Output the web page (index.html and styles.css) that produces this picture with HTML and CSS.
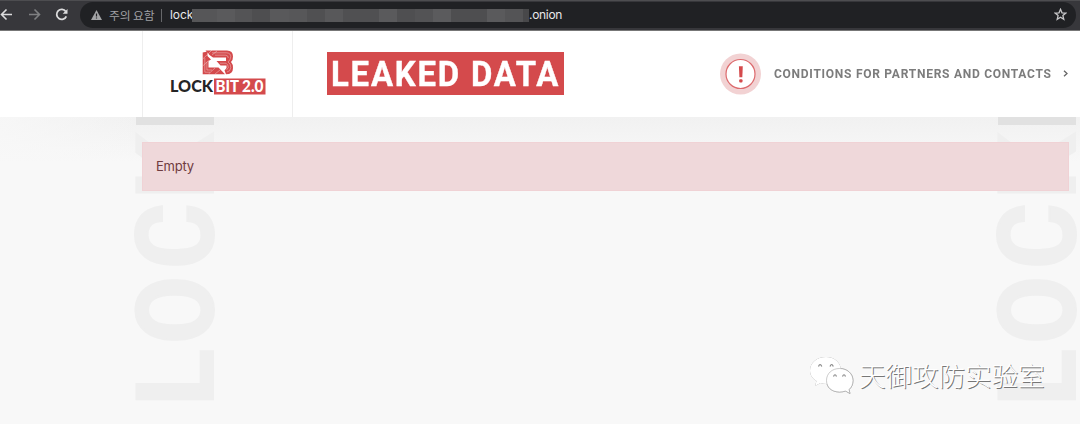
FILE: index.html
```html
<!DOCTYPE html>
<html lang="en">
<head>
<meta charset="utf-8">
<title>Leaked data</title>
<link rel="stylesheet" href="styles.css">
</head>
<body>
<div class="browser">
  <svg class="nav" width="80" height="28" viewBox="0 0 80 28" fill="none" stroke-width="1.6">
    <path d="M12 14.500H2M6.500 9.500L1.500 14.500L6.500 19.500" stroke="#dcdcdd"/>
    <path d="M29 14.500H39M34.500 9.500L39.500 14.500L34.500 19.500" stroke="#7f8082"/>
    <path d="M65.800 11.500A5 5 0 1 0 66.300 16.300" stroke="#dcdcdd" stroke-width="1.800"/>
    <path d="M67.500 9V13.800H62.700Z" fill="#dcdcdd"/>
  </svg>
  <div class="address">
    <svg class="warn" width="11" height="10" viewBox="0 0 11 10"><path d="M5.500 0L11 10H0Z" fill="#a3a4a6"/><path d="M5.500 3.500V6.400M5.500 7.400V8.600" stroke="#202124" stroke-width="1.200"/></svg>
    <span class="caution">주의 요함</span>
    <span class="divider"></span>
    <span class="host">lock</span>
    <span class="mosaic"></span>
    <span class="host tld">.onion</span>
    <svg class="star" width="13" height="13" viewBox="0 0 13 13"><path d="M6.500 1.300L8 4.800L11.800 5.100L8.900 7.600L9.800 11.300L6.500 9.300L3.200 11.300L4.100 7.600L1.200 5.100L5 4.800Z" fill="none" stroke="#c6c6c8" stroke-width="1.300"/></svg>
  </div>
</div>
<header class="header">
  <div class="logo">
    <svg width="98" height="48" viewBox="0 0 98 48">
      <path d="M32.700 2.500L37.500 1.500V6L41 9.500L38.500 11V17.500H48.500L55 24.300H32.700Z" fill="#d44a4c"/>
      <path d="M35.500 .5H57Q63 .7 63 6.500Q63 10.500 61 12Q63 14 63 18Q63 24.300 56 24.300L54.500 20.500L56.500 18V15.500H50.500L46.500 11H56V7.500H43L39.500 5Z" fill="#d44a4c"/>
      <g fill="none" stroke="#fff" stroke-opacity=".5" stroke-width=".7">
        <path d="M42 2.800H56.500Q60.800 3 60.800 6.800Q60.500 10 58 12Q60.800 13.500 60.800 17.500Q60.500 21.500 57 22"/>
        <path d="M45 5.200H56Q58.300 5.500 58.300 8M50 13.200H56Q58.300 14.500 58.300 17.500L56.500 20"/>
        <path d="M34.800 8V22.200H40M36.900 12V20H42"/>
        <path d="M32.700 9L37.500 4.500M32.700 16L38.500 10.500M38.500 24L45 18M45 24L50 20M38 4L42 0M42 5L47 1"/>
      </g>
      <rect x="44" y="28.500" width="51.500" height="16" fill="#d44a4c"/>
      <text class="logo-text" x="0" y="42" textLength="43" lengthAdjust="spacingAndGlyphs" fill="#252526">LOCK</text>
      <text class="logo-text" x="45.500" y="42" textLength="23.500" lengthAdjust="spacingAndGlyphs" fill="#fff">BIT</text>
      <text class="logo-text" x="72" y="42" textLength="21.500" lengthAdjust="spacingAndGlyphs" fill="#fff">2.0</text>
    </svg>
  </div>
  <h1 class="title"><span class="title-text">LEAKED DATA</span></h1>
  <a class="conditions">
    <svg width="42" height="42" viewBox="0 0 42 42"><circle cx="20.500" cy="21" r="20.500" fill="#f2d2d3"/><circle cx="20.500" cy="21" r="14.500" fill="#fff" stroke="#dc6a6d" stroke-width="1.200"/><path d="M18.900 13.300H22.800L22.300 24.300H19.400Z" fill="#d44a4c"/><rect x="19.200" y="26.200" width="3.300" height="3.300" rx="1" fill="#d44a4c"/></svg>
    <span class="conditions-label"><span class="conditions-text">CONDITIONS FOR PARTNERS AND CONTACTS</span></span>
    <svg class="chevron" width="5" height="7" viewBox="0 0 5 7"><path d="M1 .7L4 3.500L1 6.300" fill="none" stroke="#666" stroke-width="1.300"/></svg>
  </a>
</header>
<main class="main">
  <svg class="backdrop backdrop-left" width="80" height="307" viewBox="0 0 80 307">
    <g class="backdrop-text" transform="translate(78 306) rotate(-90)">
      <text x="17" textLength="57" lengthAdjust="spacingAndGlyphs">L</text>
      <text x="79" textLength="68" lengthAdjust="spacingAndGlyphs">O</text>
      <text x="154" textLength="66" lengthAdjust="spacingAndGlyphs">C</text>
      <text x="224" textLength="65" lengthAdjust="spacingAndGlyphs">K</text>
    </g>
    <rect x="1" width="78" height="8" fill="#e1e1e1"/>
  </svg>
  <svg class="backdrop backdrop-right" width="80" height="307" viewBox="0 0 80 307">
    <g class="backdrop-text" transform="translate(78 306) rotate(-90)">
      <text x="17" textLength="57" lengthAdjust="spacingAndGlyphs">L</text>
      <text x="79" textLength="68" lengthAdjust="spacingAndGlyphs">O</text>
      <text x="154" textLength="66" lengthAdjust="spacingAndGlyphs">C</text>
      <text x="224" textLength="65" lengthAdjust="spacingAndGlyphs">K</text>
    </g>
    <rect x="1" width="78" height="8" fill="#e1e1e1"/>
  </svg>
  <div class="notice">Empty</div>
  <div class="watermark">
    <svg width="46" height="40" viewBox="0 0 46 40">
      <g class="bubble">
        <path d="M17 1C7.500 1 1 7 1 14.500C1 19 3.500 22.500 7.500 25L6 30L11.500 27Q14 28 18 28C26 28 32 22 32 14.500C32 7 26 1 17 1Z"/>
        <path d="M30.500 12.500C23 12.500 17.500 17.500 17.500 24.500C17.500 31.500 23 36 30.500 36Q34 36 36.500 35L41 37.500L40 33.500C42.500 31.500 44 28.500 44 24.500C44 17.500 38 12.500 30.500 12.500Z"/>
      </g>
      <path d="M9.500 10.500Q11 6.500 12.800 10.500M21 10.500Q22.700 6.500 24.300 10.500M24.500 20.500Q26 17 27.500 20.500M33.500 20.500Q35 17 36.500 20.500" fill="none" stroke="#888" stroke-width="1.200"/>
    </svg>
    <span class="watermark-text">天御攻防实验室</span>
  </div>
</main>
</body>
</html>
```
FILE: styles.css
```css
* { box-sizing: border-box; }
body {
  margin: 0;
  width: 1080px;
  height: 424px;
  overflow: hidden;
  display: flex;
  flex-direction: column;
  background: #f8f8f8;
  font-family: Roboto, "Noto Sans CJK KR", sans-serif;
}
.browser {
  height: 31px;
  flex: none;
  display: flex;
  align-items: flex-start;
  background: #37373b;
  border-top: 1px solid #4d4d50;
  border-bottom: 1px solid #777;
}
.nav { flex: none; margin-top: -1px; }
.address {
  width: 996px;
  height: 26px;
  margin-top: 1px;
  padding-left: 11px;
  border-radius: 13px;
  background: #202124;
  display: flex;
  align-items: center;
  white-space: nowrap;
}
.warn { margin-right: 7px; }
.caution { width: 47px; margin-top: -2px; font: 11.800px "Noto Sans CJK KR", sans-serif; letter-spacing: -.1px; color: #a0a1a4; }
.divider { width: 1px; height: 13px; margin: 0 8px 0 5px; background: #66676a; }
.host { width: 22px; margin-top: -1px; font: 12px Inter, sans-serif; letter-spacing: -.1px; color: #e8e8e9; }
.mosaic {
  width: 337px;
  height: 13px;
  margin-top: 1px;
  background: linear-gradient(90deg, #565658 25px, #5a5a5c 25px 43px, #545456 43px 60px, #4e4e50 60px 78px, #59595b 78px 97px, #575759 97px 115px, #505052 115px 133px, #58585a 133px 151px, #505052 151px 187px, #5a5a5c 187px 205px, #4f4f51 205px 223px, #535355 223px 241px, #5b5b5d 241px 259px, #4e4e50 259px 295px, #5a5a5c 295px 313px, #545456 313px 331px, #48484a 331px);
}
.tld { width: auto; letter-spacing: -.3px; }
.star { margin-left: auto; margin-right: 9px; margin-top: -1px; }
.header {
  height: 86px;
  flex: none;
  display: flex;
  align-items: center;
  padding-bottom: 1px;
  background: #fff;
}
.logo {
  width: 151px;
  height: 86px;
  margin: 0 0 -1px 142px;
  padding: 19px 0 0 27px;
  border: solid #eee;
  border-width: 0 1px;
}
.logo-text { font: 900 17.500px Lato, sans-serif; }
.title {
  width: 237px;
  height: 43px;
  margin: 0 0 1px 34px;
  padding-left: 4px;
  background: #d44a4c;
  color: #fff;
  font: 700 34.500px/44px Roboto, sans-serif;
  letter-spacing: 1.900px;
  -webkit-text-stroke: .4px #fff;
  white-space: nowrap;
}
.title-text { display: inline-block; transform: scaleX(.953); transform-origin: left; }
.conditions { display: flex; align-items: center; margin-left: 156px; color: #7c7c7c; }
.conditions-label { width: 278px; margin: -2px 11px 0 12px; }
.conditions-text {
  display: inline-block;
  font: 700 13.500px Roboto, sans-serif;
  letter-spacing: .8px;
  white-space: nowrap;
  transform: scaleX(.892);
  transform-origin: left;
}
.main {
  flex: 1;
  position: relative;
  padding: 25px 11px 0 142px;
  background: linear-gradient(90deg, rgba(248, 248, 248, .8), transparent 140px), linear-gradient(#f1f1f1, #f8f8f8 45px);
}
.backdrop { position: absolute; top: 0; overflow: visible; }
.backdrop-left { left: 135px; }
.backdrop-right { left: 997px; }
.backdrop-text { font: 700 107px Roboto, sans-serif; fill: #efefef; stroke: #efefef; stroke-width: 2px; }
.notice {
  position: relative;
  height: 49px;
  padding-left: 13px;
  background: #efd8da;
  border: 1px solid #f0d2d5;
  color: #6f3b40;
  font: 13px/46px Inter, sans-serif;
  letter-spacing: -.2px;
}
.watermark {
  position: absolute;
  left: 809px;
  top: 239px;
  display: flex;
  align-items: center;
}
.bubble { fill: #fff; filter: drop-shadow(.7px .8px .4px #888); }
.bubble path + path { stroke: #aaa; stroke-width: .6; }
.watermark-text {
  margin: -2px 0 0 4px;
  font: 300 26.500px/40px "Noto Sans CJK SC", sans-serif;
  color: #fff;
  text-shadow: 1px 1px 0 #777;
}
```
